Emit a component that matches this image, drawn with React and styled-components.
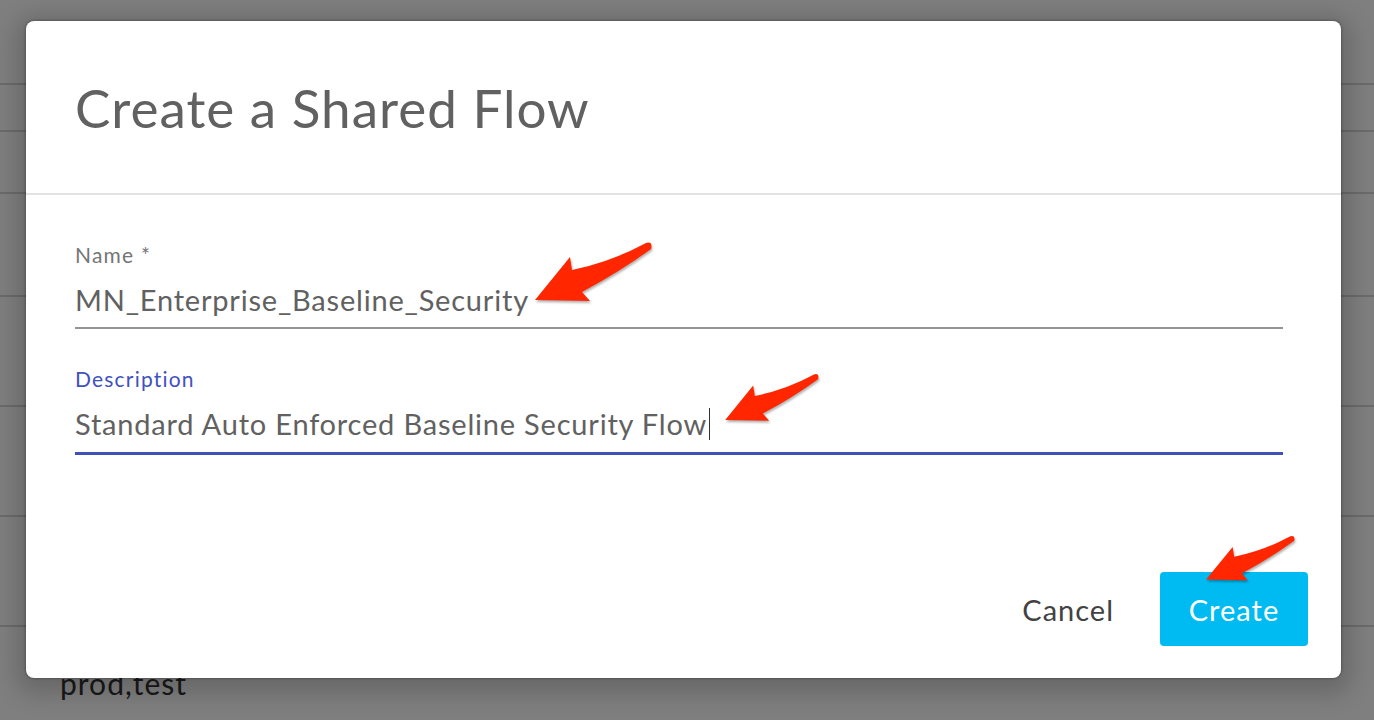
import styled, { createGlobalStyle } from "styled-components";

const GlobalStyle = createGlobalStyle`
    html, body {
        margin: 0;
        padding: 0;
        background: #ffffff;
        font-family: Lato, "Open Sans", sans-serif;
    }
`;

const rows = [85, 47, 62, 103, 110, 110, 110];

const App = () => {
    return (
        <>
            <GlobalStyle />
            <Page>
                <BackgroundList>
                    {rows.map((h, i) => (
                        <BgRow key={i} $height={h} />
                    ))}
                    <BgLastRow>prod,test</BgLastRow>
                </BackgroundList>

                <Overlay>
                    <Dialog>
                        <Header>
                            <Title>Create a Shared Flow</Title>
                        </Header>
                        <Body>
                            <Field>
                                <Label>Name *</Label>
                                <Value>MN_Enterprise_Baseline_Security</Value>
                            </Field>
                            <Field $focused>
                                <Label $focused>Description</Label>
                                <Value $focused>
                                    Standard Auto Enforced Baseline Security Flow
                                    <Caret />
                                </Value>
                            </Field>
                        </Body>
                        <Footer>
                            <TextButton>Cancel</TextButton>
                            <PrimaryButton>Create</PrimaryButton>
                        </Footer>
                    </Dialog>
                </Overlay>

                <Arrow $left={531} $top={240} $scale={1} />
                <Arrow $left={722} $top={372} $scale={0.8} />
                <Arrow $left={1203} $top={534} $scale={0.76} />
            </Page>
        </>
    );
};

const Arrow = ({ $left, $top, $scale }) => (
    <ArrowSvg
        $left={$left}
        $top={$top}
        width={130 * $scale}
        height={70 * $scale}
        viewBox="0 0 130 70"
    >
        <path
            d="M4 60 L39 17 L41 30 Q80 22 115 3 Q122 1 120 9 Q90 31 51 52 L59 61 Z"
            fill="#ff2600"
        />
    </ArrowSvg>
);

const Page = styled.div`
    position: relative;
    width: 1374px;
    height: 720px;
    overflow: hidden;
    background: #ffffff;
`;

const BackgroundList = styled.div`
    display: flex;
    flex-direction: column;
`;

const BgRow = styled.div`
    height: ${(p) => p.$height - 2}px;
    border-bottom: 2px solid #d6d6d6;
`;

const BgLastRow = styled.div`
    padding: 38px 0 0 60px;
    font-size: 30px;
    letter-spacing: 1px;
    color: #333333;
`;

const Overlay = styled.div`
    position: absolute;
    inset: 0;
    background: rgba(0, 0, 0, 0.5);
    display: flex;
    padding: 21px 33px 42px 26px;
`;

const Dialog = styled.div`
    flex: 1;
    display: flex;
    flex-direction: column;
    background: #ffffff;
    border-radius: 8px;
    box-shadow: 0 0 3px rgba(0, 0, 0, 0.45), 0 6px 24px 10px rgba(0, 0, 0, 0.18);
`;

const Header = styled.div`
    height: 172px;
    display: flex;
    align-items: center;
    padding: 0 49px;
    border-bottom: 2px solid #e2e2e2;
`;

const Title = styled.h1`
    margin: 0;
    font-size: 53px;
    font-weight: 400;
    color: #616161;
    letter-spacing: 1px;
`;

const Body = styled.div`
    display: flex;
    flex-direction: column;
    gap: 38px;
    padding: 48px 58px 0 49px;
`;

const Field = styled.div`
    display: flex;
    flex-direction: column;
`;

const Label = styled.div`
    font-size: 21px;
    line-height: 24px;
    letter-spacing: 1.2px;
    color: ${(p) => (p.$focused ? "#3f51c0" : "#757575")};
`;

const Value = styled.div`
    display: flex;
    align-items: center;
    margin-top: 15px;
    font-size: 29px;
    line-height: 36px;
    letter-spacing: 0.8px;
    color: #616161;
    padding-bottom: ${(p) => (p.$focused ? 10 : 9)}px;
    border-bottom: ${(p) => (p.$focused ? "3px solid #3f51b5" : "2px solid #949494")};
`;

const Caret = styled.span`
    display: inline-block;
    width: 1px;
    height: 32px;
    margin-left: 2px;
    background: #333333;
`;

const Footer = styled.div`
    margin-top: auto;
    display: flex;
    justify-content: flex-end;
    align-items: center;
    gap: 32px;
    padding: 0 33px 32px 0;
`;

const TextButton = styled.button`
    height: 74px;
    padding: 0 14px;
    border: none;
    background: transparent;
    font-family: Lato, "Open Sans", sans-serif;
    font-size: 29px;
    letter-spacing: 1px;
    color: #424242;
`;

const PrimaryButton = styled.button`
    width: 148px;
    height: 74px;
    border: none;
    border-radius: 4px;
    background: #00bbf2;
    font-family: Lato, "Open Sans", sans-serif;
    font-size: 29px;
    letter-spacing: 1px;
    color: #ffffff;
`;

const ArrowSvg = styled.svg`
    position: absolute;
    left: ${(p) => p.$left}px;
    top: ${(p) => p.$top}px;
    filter: drop-shadow(1px 2px 1px rgba(0, 0, 0, 0.3));
`;

export default App;
